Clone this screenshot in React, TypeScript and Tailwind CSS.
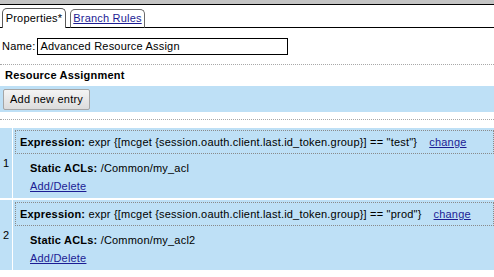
import React from "react";

type Entry = {
  id: number;
  expression: string;
  acl: string;
};

const entries: Entry[] = [
  {
    id: 1,
    expression: 'expr {[mcget {session.oauth.client.last.id_token.group}] == "test"}',
    acl: "/Common/my_acl",
  },
  {
    id: 2,
    expression: 'expr {[mcget {session.oauth.client.last.id_token.group}] == "prod"}',
    acl: "/Common/my_acl2",
  },
];

const linkClass = "text-[#1c1c94] underline";

const Row = ({ entry }: { entry: Entry }) => {
  return (
    <>
      <div className="flex items-center bg-[#bee0f6] pl-[3px]">{entry.id}</div>
      <div className="flex flex-col bg-[#bee0f6] pb-[3px] pt-[2px]">
        <div className="ml-[2px] flex h-[24px] items-center whitespace-nowrap border border-dotted border-[#8a8a8a] pl-[4px]">
          <span className="font-bold">Expression:</span>
          <span>&nbsp;{entry.expression}</span>
          <span className={`${linkClass} ml-[12px]`}>change</span>
        </div>
        <div className="mt-[5px] flex h-[18px] items-center pl-[17px]">
          <span className="font-bold">Static ACLs:</span>
          <span>&nbsp;{entry.acl}</span>
        </div>
        <div className="flex h-[18px] items-center pl-[17px]">
          <span className={linkClass}>Add/Delete</span>
        </div>
      </div>
    </>
  );
};

const App = () => {
  return (
    <div className="h-[277px] w-[494px] overflow-hidden bg-white font-['Tahoma','Liberation_Sans',sans-serif] text-[11px] leading-none tracking-[0.2px] text-black">
      <div className="h-[4px] bg-[#c4c4c4]" />
      <div className="flex h-[24px] items-end border-t border-black">
        <div className="w-[2px] self-stretch border-b border-black" />
        <div className="flex h-[20px] w-[64px] items-center justify-center rounded-t-[5px] border-x border-t border-[#5a5a5a] bg-white pb-[1px]">
          Properties*
        </div>
        <div className="w-[4px] self-stretch border-b border-black" />
        <div className="flex h-[19px] w-[75px] items-center justify-center rounded-t-[5px] border-x border-t border-b border-[#6a6a6a] border-b-black bg-white">
          <span className={linkClass}>Branch Rules</span>
        </div>
        <div className="flex-1 self-stretch border-b border-black" />
      </div>
      <div className="flex items-center gap-[2px] pl-[2px] pt-[10px]">
        <span>Name:</span>
        <div className="flex h-[17px] w-[251px] items-center border border-black pl-[2px]">
          Advanced Resource Assign
        </div>
      </div>
      <div className="mt-[9px] border-t border-dotted border-[#a8a8a8]" />
      <div className="flex h-[21px] items-center pl-[5px] font-bold">Resource Assignment</div>
      <div className="flex h-[26px] items-center bg-[#bee0f6] pl-[3px]">
        <button className="h-[21px] w-[87px] rounded-[2px] border border-[#a5a5a5] bg-gradient-to-b from-[#f4f4f4] to-[#dcdcdc] text-[11px] tracking-[0.2px]">
          Add new entry
        </button>
      </div>
      <div className="mt-[7px] border-t border-dotted border-[#a8a8a8]" />
      <div className="mt-[8px] grid grid-cols-[12px_1fr] gap-x-[1px] gap-y-[2px]">
        {entries.map((entry) => (
          <Row key={entry.id} entry={entry} />
        ))}
      </div>
    </div>
  );
};

export default App;
